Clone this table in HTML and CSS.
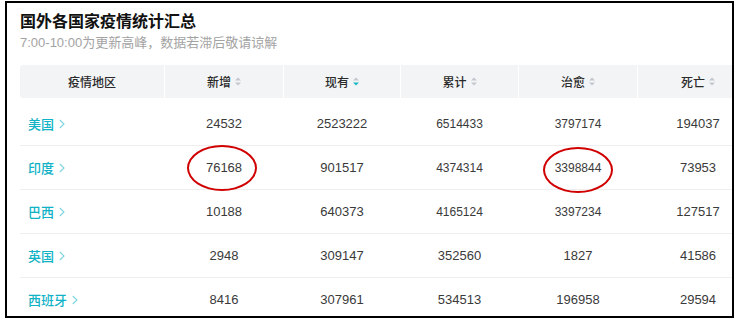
FILE: index.html
```html
<!DOCTYPE html>
<html lang="zh">
<head>
<meta charset="utf-8">
<link rel="stylesheet" href="styles.css">
</head>
<body>
<div class="frame">
  <h1 class="title">国外各国家疫情统计汇总</h1>
  <p class="sub">7:00-10:00为更新高峰，数据若滞后敬请谅解</p>
  <div class="table">
    <div class="row head">
      <div class="hc">疫情地区</div>
      <div class="hc">新增<svg class="sort" viewBox="0 0 6 9" width="6" height="9"><path d="M0 3.6 L3 0.4 L6 3.6 Z" fill="#c3c7cd"/><path d="M0 5.4 L6 5.4 L3 8.6 Z" fill="#c3c7cd"/></svg></div>
      <div class="hc">现有<svg class="sort" viewBox="0 0 6 9" width="6" height="9"><path d="M0 3.6 L3 0.4 L6 3.6 Z" fill="#c3c7cd"/><path d="M0 5.4 L6 5.4 L3 8.6 Z" fill="#1bb8c8"/></svg></div>
      <div class="hc">累计<svg class="sort" viewBox="0 0 6 9" width="6" height="9"><path d="M0 3.6 L3 0.4 L6 3.6 Z" fill="#c3c7cd"/><path d="M0 5.4 L6 5.4 L3 8.6 Z" fill="#c3c7cd"/></svg></div>
      <div class="hc">治愈<svg class="sort" viewBox="0 0 6 9" width="6" height="9"><path d="M0 3.6 L3 0.4 L6 3.6 Z" fill="#c3c7cd"/><path d="M0 5.4 L6 5.4 L3 8.6 Z" fill="#c3c7cd"/></svg></div>
      <div class="hc">死亡<svg class="sort" viewBox="0 0 6 9" width="6" height="9"><path d="M0 3.6 L3 0.4 L6 3.6 Z" fill="#c3c7cd"/><path d="M0 5.4 L6 5.4 L3 8.6 Z" fill="#c3c7cd"/></svg></div>
    </div>
    <div class="row">
      <div class="name">美国<svg class="chev" viewBox="0 0 6 10" width="6" height="10"><polyline points="0.8,1 5,5 0.8,9" fill="none" stroke="#7dd4de" stroke-width="1.1"/></svg></div>
      <div class="num">24532</div><div class="num">2523222</div><div class="num sm">6514433</div><div class="num sm">3797174</div><div class="num">194037</div>
    </div>
    <div class="row">
      <div class="name">印度<svg class="chev" viewBox="0 0 6 10" width="6" height="10"><polyline points="0.8,1 5,5 0.8,9" fill="none" stroke="#7dd4de" stroke-width="1.1"/></svg></div>
      <div class="num">76168</div><div class="num">901517</div><div class="num sm">4374314</div><div class="num sm">3398844</div><div class="num">73953</div>
    </div>
    <div class="row">
      <div class="name">巴西<svg class="chev" viewBox="0 0 6 10" width="6" height="10"><polyline points="0.8,1 5,5 0.8,9" fill="none" stroke="#7dd4de" stroke-width="1.1"/></svg></div>
      <div class="num">10188</div><div class="num">640373</div><div class="num sm">4165124</div><div class="num sm">3397234</div><div class="num">127517</div>
    </div>
    <div class="row">
      <div class="name">英国<svg class="chev" viewBox="0 0 6 10" width="6" height="10"><polyline points="0.8,1 5,5 0.8,9" fill="none" stroke="#7dd4de" stroke-width="1.1"/></svg></div>
      <div class="num">2948</div><div class="num">309147</div><div class="num">352560</div><div class="num">1827</div><div class="num">41586</div>
    </div>
    <div class="row">
      <div class="name">西班牙<svg class="chev" viewBox="0 0 6 10" width="6" height="10"><polyline points="0.8,1 5,5 0.8,9" fill="none" stroke="#7dd4de" stroke-width="1.1"/></svg></div>
      <div class="num">8416</div><div class="num">307961</div><div class="num">534513</div><div class="num">196958</div><div class="num">29594</div>
    </div>
  </div>
  <div class="circle c1"></div>
  <div class="circle c2"></div>
</div>
</body>
</html>
```
FILE: styles.css
```css
* { box-sizing: border-box; }
html, body { margin: 0; padding: 0; background: #fff; }
body { font-family: "Liberation Sans", "Noto Sans CJK SC", sans-serif; }

.frame {
  position: relative;
  margin: 1px 0 0 5px;
  width: 729px;
  height: 317px;
  border: 2px solid #000;
  padding: 7px 0 0 13px;
  overflow: hidden;
}

.title {
  margin: 0;
  font-size: 16px;
  line-height: 20px;
  font-weight: bold;
  color: #111;
  font-family: "Noto Sans CJK SC", sans-serif;
}

.sub {
  margin: 4px 0 0;
  font-size: 13px;
  line-height: 18px;
  color: #a3a3a3;
}

.table {
  margin-top: 13px;
  width: 740px;
}

.row {
  display: grid;
  grid-template-columns: 144px 118px 116px 117px 118px 120px;
  column-gap: 1px;
  height: 44px;
  align-items: center;
  border-bottom: 1px solid #efefef;
}

.row.head {
  height: 33px;
  border-bottom: none;
  margin-bottom: 4px;
  border-radius: 3px;
  overflow: hidden;
  align-items: stretch;
}

.hc {
  background: #f3f4f6;
  font-size: 12px;
  font-weight: 500;
  color: #2a2a2a;
  display: flex;
  align-items: center;
  justify-content: center;
  font-family: "Noto Sans CJK SC", sans-serif;
}

.sort { margin-left: 4px; display: block; }

.name {
  padding-left: 8px;
  font-size: 13px;
  font-weight: 500;
  color: #10b2c6;
  display: flex;
  align-items: center;
  font-family: "Noto Sans CJK SC", sans-serif;
}

.chev { margin-left: 5px; display: block; }

.num {
  text-align: center;
  font-size: 13px;
  color: #3a3a3a;
}

.num.sm { font-size: 12px; }

.circle {
  position: absolute;
  width: 70px;
  height: 46px;
  border: 2.5px solid #d00000;
  border-radius: 50%;
}

.c1 { left: 180px; top: 142px; }
.c2 { left: 536px; top: 144px; }
```
